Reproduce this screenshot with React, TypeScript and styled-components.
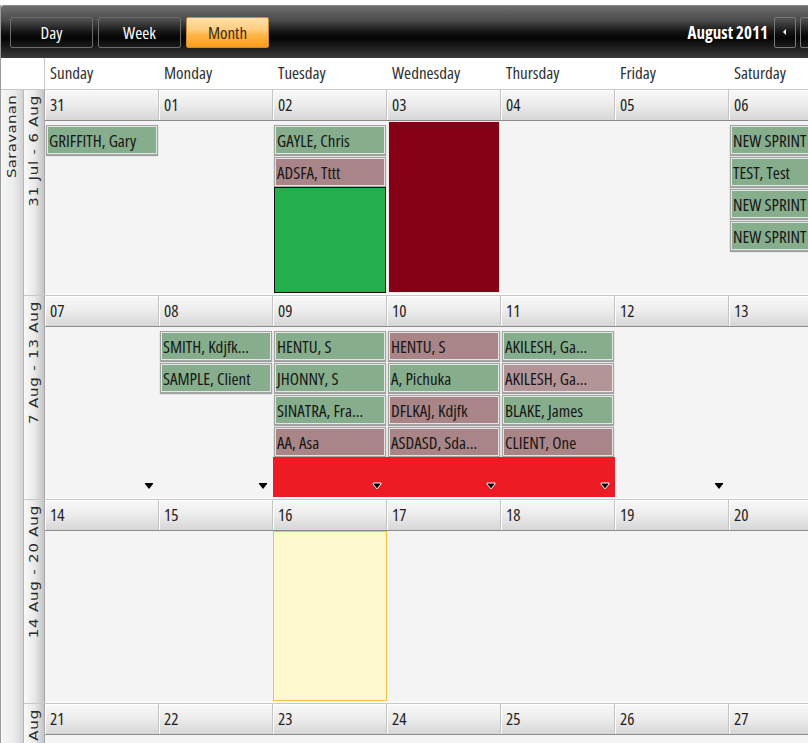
import React from "react";
import styled, { createGlobalStyle } from "styled-components";

const NARROW = `"Open Sans", "Roboto", "Liberation Sans", Arial, sans-serif`;
const WIDE = `"DejaVu Sans", Verdana, sans-serif`;
const COL = 114;

const GlobalStyle = createGlobalStyle`
  html, body {
    margin: 0;
    padding: 0;
    background: #ffffff;
    overflow: hidden;
  }
  body {
    font-family: ${NARROW};
    font-stretch: 75%;
  }
`;

type Tone = "green" | "rose" | "blush";
type Appt = { text: string; tone: Tone };
type Day = {
  date: string;
  appts?: Appt[];
  fill?: "green" | "maroon";
  today?: boolean;
  hot?: boolean;
};
type Week = { label: string; height: number; more?: boolean; days: Day[] };

const g = (text: string): Appt => ({ text, tone: "green" });
const r = (text: string): Appt => ({ text, tone: "rose" });

const weeks: Week[] = [
  {
    label: "31 Jul - 6 Aug",
    height: 172,
    days: [
      { date: "31", appts: [g("GRIFFITH, Gary")] },
      { date: "01" },
      { date: "02", appts: [g("GAYLE, Chris"), r("ADSFA, Tttt")], fill: "green" },
      { date: "03", fill: "maroon" },
      { date: "04" },
      { date: "05" },
      {
        date: "06",
        appts: [g("NEW SPRINT"), g("TEST, Test"), g("NEW SPRINT"), g("NEW SPRINT")],
      },
    ],
  },
  {
    label: "7 Aug - 13 Aug",
    height: 170,
    more: true,
    days: [
      { date: "07" },
      { date: "08", appts: [g("SMITH, Kdjfk..."), g("SAMPLE, Client")] },
      {
        date: "09",
        hot: true,
        appts: [g("HENTU, S"), g("JHONNY, S"), g("SINATRA, Fra..."), r("AA, Asa")],
      },
      {
        date: "10",
        hot: true,
        appts: [r("HENTU, S"), g("A, Pichuka"), r("DFLKAJ, Kdjfk"), r("ASDASD, Sda...")],
      },
      {
        date: "11",
        hot: true,
        appts: [
          g("AKILESH, Ga..."),
          { text: "AKILESH, Ga...", tone: "blush" },
          g("BLAKE, James"),
          r("CLIENT, One"),
        ],
      },
      { date: "12" },
      { date: "13" },
    ],
  },
  {
    label: "14 Aug - 20 Aug",
    height: 170,
    days: [
      { date: "14" },
      { date: "15" },
      { date: "16", today: true },
      { date: "17" },
      { date: "18" },
      { date: "19" },
      { date: "20" },
    ],
  },
  {
    label: "21 Aug - 27 Aug",
    height: 170,
    days: [
      { date: "21" },
      { date: "22" },
      { date: "23" },
      { date: "24" },
      { date: "25" },
      { date: "26" },
      { date: "27" },
    ],
  },
];

const dayNames = ["Sunday", "Monday", "Tuesday", "Wednesday", "Thursday", "Friday", "Saturday"];

const toneColors: Record<Tone, string> = {
  green: "#86ad8c",
  rose: "#a98587",
  blush: "#b49597",
};

function MoreArrow({ light }: { light?: boolean }) {
  return (
    <svg width="10" height="8" viewBox="0 0 10 8">
      <polygon
        points="1,1 9,1 9,2 5,7 1,2"
        fill="#000"
        stroke={light ? "#fff" : "none"}
        strokeWidth="1"
      />
    </svg>
  );
}

export default function App() {
  return (
    <>
      <GlobalStyle />
      <Scheduler>
        <Toolbar>
          <ViewButton>Day</ViewButton>
          <ViewButton>Week</ViewButton>
          <ViewButton $active>Month</ViewButton>
          <Filler />
          <MonthTitle>August 2011</MonthTitle>
          <NavButton>
            <svg width="6" height="8" viewBox="0 0 6 8">
              <polygon points="4,1 4,7 1,4" fill="#fff" />
            </svg>
          </NavButton>
          <NavButton>
            <svg width="6" height="8" viewBox="0 0 6 8">
              <polygon points="2,1 2,7 5,4" fill="#fff" />
            </svg>
          </NavButton>
        </Toolbar>

        <DayNames>
          <Corner />
          {dayNames.map((d) => (
            <DayName key={d}>{d}</DayName>
          ))}
        </DayNames>

        <Body>
          <GroupColumn>
            <Rotated $spacing={0.3}>Saravanan</Rotated>
          </GroupColumn>
          <Weeks>
            {weeks.map((w) => (
              <WeekRow key={w.label}>
                <WeekLabel>
                  <Rotated $spacing={0.8}>{w.label}</Rotated>
                </WeekLabel>
                <WeekBody>
                  <DateRow>
                    {w.days.map((d) => (
                      <DateCell key={d.date}>{d.date}</DateCell>
                    ))}
                  </DateRow>
                  <Content $h={w.height} $more={!!w.more}>
                    {w.days.map((d) => (
                      <DayCell key={d.date} $today={!!d.today} $bare={d.fill === "maroon"}>
                        {d.appts?.map((a, i) => (
                          <Appointment key={i} $tone={a.tone}>
                            {a.text}
                          </Appointment>
                        ))}
                        {d.fill && <Block $fill={d.fill} />}
                      </DayCell>
                    ))}
                    {w.more &&
                      w.days.map((d) => (
                        <MoreCell key={"m" + d.date} $hot={!!d.hot}>
                          <MoreArrow light={d.hot} />
                        </MoreCell>
                      ))}
                  </Content>
                </WeekBody>
              </WeekRow>
            ))}
          </Weeks>
        </Body>
      </Scheduler>
    </>
  );
}

const Scheduler = styled.div`
  width: ${45 + COL * 7}px;
  height: 738px;
  margin-top: 5px;
  border-left: 1px solid #9c9c9c;
  box-sizing: border-box;
  display: flex;
  flex-direction: column;
  overflow: hidden;
`;

const Toolbar = styled.div`
  height: 53px;
  flex-shrink: 0;
  display: flex;
  align-items: center;
  gap: 5px;
  padding: 0 21px 0 9px;
  box-sizing: border-box;
  border-top: 1px solid #8a8a8a;
  border-top-left-radius: 3px;
  background: linear-gradient(
    to bottom,
    #6e6e6e 0%,
    #4a4a4a 28%,
    #141414 50%,
    #050505 62%,
    #1e1e1e 80%,
    #3a3a3a 100%
  );
`;

const ViewButton = styled.div<{ $active?: boolean }>`
  width: 83px;
  height: 31px;
  box-sizing: border-box;
  display: flex;
  align-items: center;
  justify-content: center;
  font-size: 17px;
  border-radius: 2px;
  border: 1px solid ${({ $active }) => ($active ? "#c98a3c" : "#6c6c6c")};
  color: ${({ $active }) => ($active ? "#3b2a12" : "#ffffff")};
  background: ${({ $active }) =>
    $active
      ? "linear-gradient(to bottom, #ffe2b0 0%, #ffcc80 40%, #ffb444 60%, #ff9d16 100%)"
      : "transparent"};
`;

const Filler = styled.div`
  flex: 1;
`;

const MonthTitle = styled.div`
  font-size: 17px;
  font-weight: bold;
  color: #ffffff;
  text-shadow: 1px 1px 1px #000;
  margin-right: 2px;
`;

const NavButton = styled.div`
  width: 22px;
  height: 31px;
  box-sizing: border-box;
  border: 1px solid #7a7a7a;
  border-radius: 2px;
  display: flex;
  align-items: center;
  justify-content: center;
  margin-left: -1px;
`;

const DayNames = styled.div`
  display: grid;
  grid-template-columns: 44px repeat(7, ${COL}px);
  height: 31px;
  flex-shrink: 0;
  border-bottom: 1px solid #c8c8c8;
  background: #ffffff;
`;

const Corner = styled.div`
  border-right: 1px solid #c8c8c8;
`;

const DayName = styled.div`
  display: flex;
  align-items: center;
  padding: 0 0 2px 5px;
  font-size: 17px;
  color: #2e2e2e;
`;

const Body = styled.div`
  flex: 1;
  display: flex;
  align-items: stretch;
`;

const GroupColumn = styled.div`
  width: 22px;
  flex-shrink: 0;
  border-right: 1px solid #b8b8b8;
  background: linear-gradient(to right, #f6f6f6 0%, #ececec 60%, #d2d2d2 100%);
  display: flex;
  flex-direction: column;
  align-items: center;
  padding-top: 5px;
`;

const Rotated = styled.span<{ $spacing: number }>`
  writing-mode: vertical-rl;
  transform: rotate(180deg) scaleX(0.78);
  font-family: ${WIDE};
  font-stretch: normal;
  font-size: 15px;
  line-height: 1;
  color: #2a2a2a;
  white-space: nowrap;
  letter-spacing: ${({ $spacing }) => $spacing}px;
`;

const Weeks = styled.div`
  display: flex;
  flex-direction: column;
`;

const WeekRow = styled.div`
  display: flex;
  flex-shrink: 0;
  padding-bottom: 2px;
  border-bottom: 1px solid #c8c8c8;
  background: #fafafa;
`;

const WeekLabel = styled.div`
  width: 20px;
  border-right: 1px solid #a8a8a8;
  background: linear-gradient(to right, #fafafa 0%, #e8e8e8 55%, #c4c4c4 100%);
  display: flex;
  flex-direction: column;
  align-items: center;
  padding-top: 5px;
  margin-bottom: -2px;
  overflow: hidden;
`;

const WeekBody = styled.div`
  display: flex;
  flex-direction: column;
  width: ${COL * 7}px;
`;

const DateRow = styled.div`
  display: grid;
  grid-template-columns: repeat(7, ${COL}px);
  height: 30px;
  border-bottom: 1px solid #8c8c8c;
`;

const DateCell = styled.div`
  box-sizing: border-box;
  padding: 0 0 1px 5px;
  display: flex;
  align-items: center;
  font-size: 17px;
  color: #1e1e1e;
  border-right: 1px solid #c4c4c4;
  box-shadow: inset 1px 1px 0 #ffffff;
  background: linear-gradient(to bottom, #f8f8f8 0%, #ececec 50%, #d6d6d6 100%);
`;

const Content = styled.div<{ $h: number; $more: boolean }>`
  display: grid;
  grid-template-columns: repeat(7, ${COL}px);
  grid-template-rows: ${({ $more }) => ($more ? "auto 1fr" : "1fr")};
  height: ${({ $h }) => $h}px;
  background: #f4f4f4;
  overflow: hidden;
`;

const DayCell = styled.div<{ $today: boolean; $bare: boolean }>`
  display: flex;
  flex-direction: column;
  gap: 2px;
  min-width: 0;
  box-sizing: border-box;
  padding: ${({ $bare }) => ($bare ? "0 1px" : "4px 1px 0")};
  background: ${({ $today }) => ($today ? "#fff9cf" : "transparent")};
  border: ${({ $today }) => ($today ? "1px solid #f2c23e" : "none")};
`;

const Appointment = styled.div<{ $tone: Tone }>`
  height: 30px;
  flex-shrink: 0;
  box-sizing: border-box;
  padding-left: 2px;
  display: flex;
  align-items: center;
  font-size: 17px;
  color: #161616;
  white-space: nowrap;
  overflow: hidden;
  background: ${({ $tone }) => toneColors[$tone]};
  border: 1px solid #a4a4a4;
  box-shadow: inset 0 0 0 1px rgba(255, 255, 255, 0.75), 0 1px 1px rgba(0, 0, 0, 0.35);
`;

const Block = styled.div<{ $fill: "green" | "maroon" }>`
  flex: 1;
  box-sizing: border-box;
  margin-top: ${({ $fill }) => ($fill === "green" ? "-2px" : "0")};
  background: ${({ $fill }) => ($fill === "green" ? "#23b04c" : "#860016")};
  border: 1px solid ${({ $fill }) => ($fill === "green" ? "#111111" : "#f2e6e8")};
`;

const MoreCell = styled.div<{ $hot: boolean }>`
  display: flex;
  justify-content: flex-end;
  align-items: flex-end;
  padding: 0 5px 7px 0;
  background: ${({ $hot }) => ($hot ? "#ed1c24" : "transparent")};
`;
